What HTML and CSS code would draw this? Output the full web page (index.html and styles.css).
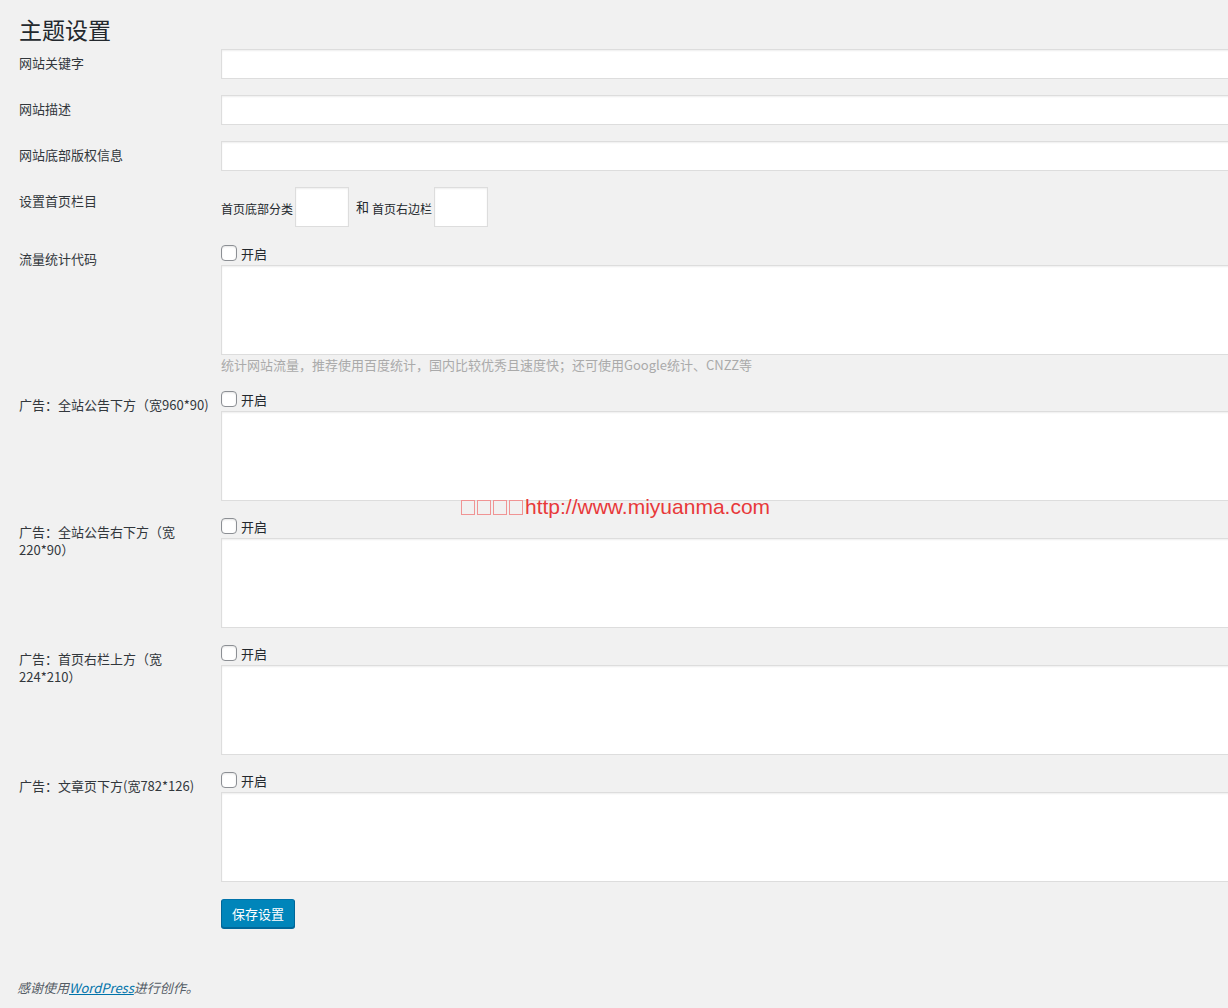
FILE: index.html
```html
<!DOCTYPE html>
<html lang="zh-CN">
<head>
<meta charset="utf-8">
<title>主题设置</title>
<link rel="stylesheet" href="styles.css">
</head>
<body>
<div class="wrap">
  <h2 class="title">主题设置</h2>
  <form class="form">
    <div class="row">
      <label class="label">网站关键字</label>
      <div class="field"><input class="text" type="text"></div>
    </div>
    <div class="row">
      <label class="label">网站描述</label>
      <div class="field"><input class="text" type="text"></div>
    </div>
    <div class="row">
      <label class="label">网站底部版权信息</label>
      <div class="field"><input class="text" type="text"></div>
    </div>
    <div class="row row-cats">
      <label class="label">设置首页栏目</label>
      <div class="field cats">
        <span class="small">首页底部分类</span><input class="tiny" type="text"><span class="and">和</span><span class="small">首页右边栏</span><input class="tiny" type="text">
      </div>
    </div>
    <div class="row row-area">
      <label class="label">流量统计代码</label>
      <div class="field">
        <label class="check"><input type="checkbox" class="cb"><span>开启</span></label>
        <textarea class="area"></textarea>
        <p class="desc">统计网站流量，推荐使用百度统计，国内比较优秀且速度快；还可使用Google统计、CNZZ等</p>
      </div>
    </div>
    <div class="row row-area">
      <label class="label">广告：全站公告下方（宽960*90)</label>
      <div class="field">
        <label class="check"><input type="checkbox" class="cb"><span>开启</span></label>
        <textarea class="area"></textarea>
      </div>
    </div>
    <div class="row row-area">
      <label class="label">广告：全站公告右下方（宽220*90）</label>
      <div class="field">
        <label class="check"><input type="checkbox" class="cb"><span>开启</span></label>
        <textarea class="area"></textarea>
      </div>
    </div>
    <div class="row row-area">
      <label class="label">广告：首页右栏上方（宽224*210）</label>
      <div class="field">
        <label class="check"><input type="checkbox" class="cb"><span>开启</span></label>
        <textarea class="area"></textarea>
      </div>
    </div>
    <div class="row row-area">
      <label class="label">广告：文章页下方(宽782*126)</label>
      <div class="field">
        <label class="check"><input type="checkbox" class="cb"><span>开启</span></label>
        <textarea class="area"></textarea>
      </div>
    </div>
    <div class="row">
      <div></div>
      <div class="field"><button type="button" class="button">保存设置</button></div>
    </div>
  </form>
  <p class="footer">感谢使用<a href="#">WordPress</a>进行创作。</p>
  <div class="watermark"><span class="boxes"><i class="box"></i><i class="box"></i><i class="box"></i><i class="box"></i></span>http://www.miyuanma.com</div>
</div>
</body>
</html>
```
FILE: styles.css
```css
html, body {
  margin: 0;
  padding: 0;
  background: #f1f1f1;
  overflow: hidden;
  height: 1008px;
}
body {
  font-family: "Noto Sans CJK SC", "Open Sans", sans-serif;
  font-size: 13px;
  color: #23282d;
}
.wrap {
  position: relative;
  box-sizing: border-box;
  padding: 15px 0 0 19px;
  height: 1008px;
}
.title {
  margin: 0 0 5px;
  font-size: 23px;
  line-height: 29px;
  font-weight: 400;
  color: #23282d;
}
.form {
  margin: 0;
}
.row {
  display: grid;
  grid-template-columns: 202px 1100px;
  margin-bottom: 16px;
}
.row-cats {
  margin-bottom: 18px;
}
.row-area {
  margin-bottom: 17px;
}
.label {
  padding: 5px 12px 0 0;
  line-height: 18px;
  color: #32373c;
}
.field {
  min-width: 0;
}
.text {
  display: block;
  box-sizing: border-box;
  width: 100%;
  height: 30px;
  margin: 0;
  border: 1px solid #ddd;
  box-shadow: inset 0 1px 2px rgba(0,0,0,.07);
  background: #fff;
}
.cats {
  display: flex;
  align-items: center;
  height: 40px;
}
.small {
  font-size: 12px;
  line-height: 16px;
  padding-top: 3px;
}
.and {
  margin: 0 3px 0 4px;
  padding-bottom: 2px;
}
.tiny {
  box-sizing: border-box;
  width: 54px;
  height: 40px;
  margin: 0 3px 0 2px;
  border: 1px solid #ddd;
  box-shadow: inset 0 1px 2px rgba(0,0,0,.07);
  background: #fff;
}
.check {
  display: flex;
  align-items: flex-start;
  height: 20px;
  line-height: 16px;
}
.cb {
  appearance: none;
  -webkit-appearance: none;
  box-sizing: border-box;
  width: 16px;
  height: 16px;
  margin: 0 4px 0 0;
  border: 1px solid #8c8f94;
  border-radius: 4px;
  background: #fff;
  box-shadow: inset 0 1px 2px rgba(0,0,0,.1);
}
.check span {
  padding-top: 1px;
}
.area {
  display: block;
  box-sizing: border-box;
  width: 100%;
  height: 90px;
  margin: 0;
  border: 1px solid #ddd;
  box-shadow: inset 0 1px 2px rgba(0,0,0,.07);
  background: #fff;
  resize: none;
}
.desc {
  margin: 0;
  line-height: 19px;
  color: #aaa;
}
.button {
  box-sizing: border-box;
  height: 29px;
  padding: 0 10px;
  border: 1px solid #0073aa;
  border-color: #0073aa #006799 #006799;
  border-radius: 3px;
  background: #0085ba;
  box-shadow: 0 1px 0 #006799;
  color: #fff;
  font-family: "Noto Sans CJK SC", sans-serif;
  font-size: 13px;
  line-height: 26px;
}
.footer {
  position: absolute;
  left: 17px;
  top: 978px;
  margin: 0;
  font-style: italic;
  color: #555d66;
  line-height: 20px;
}
.footer a {
  color: #0073aa;
}
.watermark {
  position: absolute;
  left: 461px;
  top: 494px;
  display: flex;
  align-items: center;
  font-family: "Liberation Sans", Arial, sans-serif;
  font-size: 21px;
  line-height: 26px;
  color: #e8393a;
}
.boxes {
  display: flex;
  gap: 2px;
  margin-right: 2px;
  padding-top: 1px;
}
.box {
  display: block;
  box-sizing: border-box;
  width: 14px;
  height: 15px;
  border: 1.5px solid #f09494;
}
```
